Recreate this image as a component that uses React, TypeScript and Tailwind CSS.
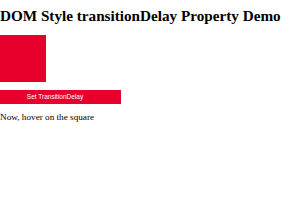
export default function App() {
  return (
    <div className="flex flex-col items-start bg-white w-[300px] h-[210px] font-['Liberation_Serif',serif] text-black">
      <h1 className="mt-[7px] text-[15.2px] leading-[18px] font-bold whitespace-nowrap">
        DOM Style transitionDelay Property Demo
      </h1>
      <div className="mt-[10px] w-[46px] h-[47px] bg-[#e8002d]" />
      <button className="mt-[8px] w-[121px] h-[14px] pr-[11px] bg-[#e8002d] text-white text-[6.5px] leading-[14px] font-['Liberation_Sans',sans-serif]">
        Set TransitionDelay
      </button>
      <p className="mt-[7px] text-[9.2px] leading-[12px]">Now, hover on the square</p>
    </div>
  );
}
